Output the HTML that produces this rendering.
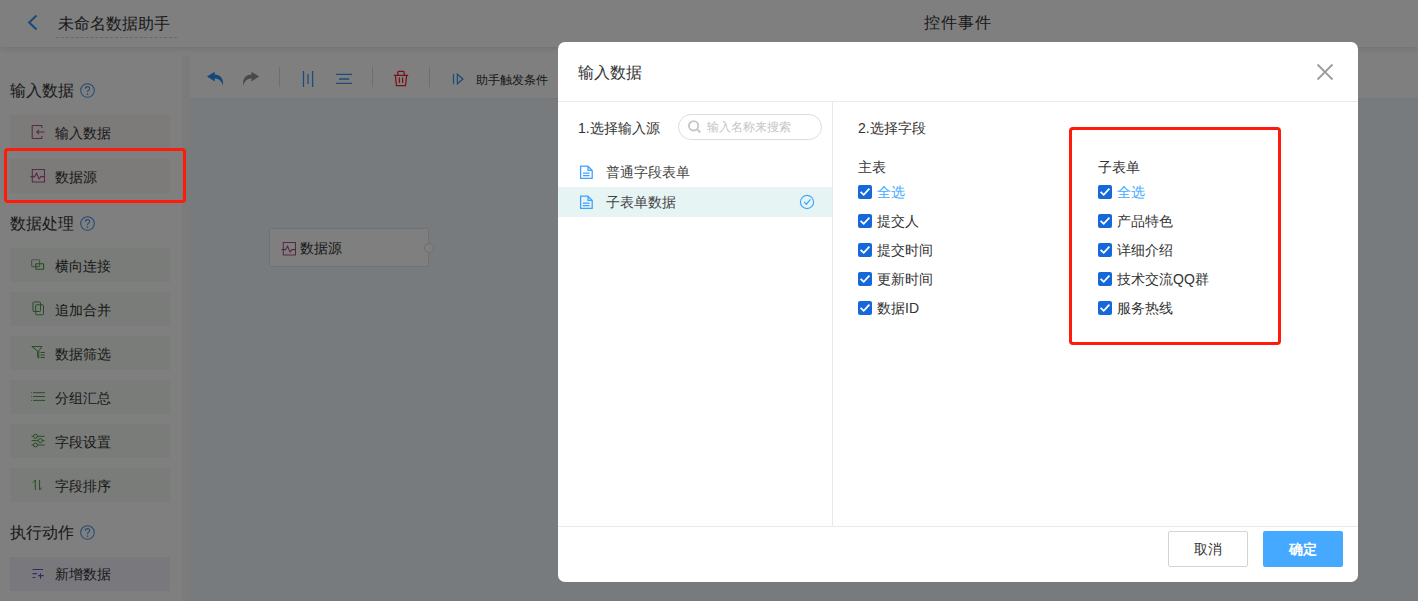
<!DOCTYPE html>
<html><head><meta charset="utf-8">
<style>
*{box-sizing:border-box;margin:0;padding:0}
html,body{width:1418px;height:601px;overflow:hidden;background:#fff;font-family:"Liberation Sans",sans-serif;color:#333}
.abs{position:absolute}
svg{position:absolute;overflow:visible}
.t{position:absolute;white-space:nowrap;line-height:20px;margin-top:1px}
#header{left:0;top:0;width:1418px;height:47px;background:#fff;box-shadow:0 2px 7px rgba(0,0,0,.11);z-index:2}
#sidebar{left:0;top:47px;width:182px;height:554px;background:#fff}
#strip{left:182px;top:55px;width:8px;height:546px;background:#f7f7f7}
#tbtop{display:none}
#toolbar{left:190px;top:47px;width:1228px;height:52px;background:#fff;border-bottom:1px solid #eee}
#canvas{left:190px;top:99px;width:1228px;height:502px;background:#f1f6fa}
.sec{position:absolute;left:10px;font-size:16px;line-height:20px;color:#333;margin-top:1px}
.help{position:absolute;left:80px;width:15px;height:15px;margin-top:0.5px}
.item{position:absolute;left:10px;width:160px;height:34px;font-size:14px;line-height:34px;color:#333}
.item svg{left:20px;top:9px}
.item span{position:absolute;left:45px;top:1px}
.in{background:#faf4f4}
.pr{background:#f4f8f3}
.ac{background:#f2f2fb}
#overlay{left:0;top:0;width:1418px;height:601px;background:rgba(0,0,0,.5);z-index:5}
#modal{left:558px;top:42px;width:800px;height:540px;background:#fff;border-radius:7px;z-index:6;overflow:hidden}
.red{position:absolute;border:3px solid #ff1a0a;border-radius:4px;z-index:10}
.cb{position:absolute;width:14px;height:14px;background:#1568d9;border-radius:2px}
.fl{position:absolute;font-size:14px;line-height:20px;color:#333;white-space:nowrap}
.btn{position:absolute;top:489px;width:80px;height:36px;border-radius:2px;font-size:14px;line-height:34px;text-align:center}
</style></head>
<body>
<!-- underlying page -->
<div id="header" class="abs">
  <svg style="left:26px;top:14px" width="14" height="18" viewBox="0 0 14 18"><path d="M10.5 1.5 L3.2 8.5 L10.5 15.5" fill="none" stroke="#3c96ee" stroke-width="2.2"/></svg>
  <div class="t" style="left:58px;top:13px;font-size:16px;color:#333">未命名数据助手</div>
  <div class="abs" style="left:56px;top:37px;width:121px;height:0;border-top:1px dashed #d0d0d0"></div>
  <div class="t" style="left:924px;top:12px;font-size:16px;color:#333;letter-spacing:1px">控件事件</div>
</div>
<div id="sidebar" class="abs"></div>
<div id="strip" class="abs"></div>
<div id="tbtop" class="abs"></div>
<div id="toolbar" class="abs"></div>
<div id="canvas" class="abs"></div>

<!-- toolbar icons -->
<svg style="left:207px;top:71px" width="17" height="16" viewBox="0 0 17 16"><path d="M0 5.4 L7.7 0.8 V3.6 C12.8 3.6 16.8 7 16 14.7 C14.6 10.2 11.8 7.6 7.7 7.6 V10.4 Z" fill="#2b8ff0"/></svg>
<svg style="left:243px;top:71px" width="17" height="16" viewBox="0 0 17 16"><path d="M16.2 5.4 L8.5 0.8 V3.6 C3.4 3.6 -0.6 7 0.2 14.7 C1.6 10.2 4.4 7.6 8.5 7.6 V10.4 Z" fill="#939393"/></svg>
<div class="abs" style="left:279px;top:67px;width:1px;height:20px;background:#ddd"></div>
<svg style="left:300px;top:70px" width="16" height="18" viewBox="0 0 16 18"><path d="M3.5 1 V17 M8 4 V14 M12.6 1 V17" stroke="#3c96ee" stroke-width="1.3" fill="none"/></svg>
<svg style="left:335px;top:72px" width="18" height="14" viewBox="0 0 18 14"><path d="M1 2.4 H17.2 M4 7 H14.2 M1 11.4 H17.2" stroke="#3c96ee" stroke-width="1.3" fill="none"/></svg>
<div class="abs" style="left:372px;top:67px;width:1px;height:20px;background:#ddd"></div>
<svg style="left:393px;top:70px" width="16" height="17" viewBox="0 0 16 17"><path d="M4.8 5 V2.4 Q4.8 1.3 5.9 1.3 H10.1 Q11.2 1.3 11.2 2.4 V5 M0.8 5.3 H15.2 M2.4 5.3 L3.4 15.7 H12.5 L13.6 5.3 M6.4 7.6 V13 M9.6 7.6 V13" stroke="#f0202a" stroke-width="1.25" fill="none"/></svg>
<div class="abs" style="left:429px;top:67px;width:1px;height:20px;background:#ddd"></div>
<svg style="left:450px;top:72px" width="16" height="14" viewBox="0 0 16 14"><path d="M3.5 1.8 V12.2 M7.4 2.2 L12.9 7 L7.4 11.8 Z" stroke="#3c96ee" stroke-width="1.3" fill="none"/></svg>
<div class="t" style="left:476px;top:69px;font-size:12px;color:#333">助手触发条件</div>

<!-- sidebar content -->
<div class="sec" style="top:80px">输入数据</div>
<svg class="help" style="top:82px" width="15" height="15" viewBox="0 0 15 15"><circle cx="7.5" cy="7.5" r="6.8" fill="none" stroke="#4a94e6" stroke-width="1.05"/><path d="M5.3 5.8 Q5.3 3.6 7.5 3.6 Q9.7 3.6 9.7 5.6 Q9.7 6.8 8.3 7.4 Q7.5 7.8 7.5 9" fill="none" stroke="#4a94e6" stroke-width="1.05"/><circle cx="7.5" cy="11.1" r=".8" fill="#3c96ee"/></svg>
<div class="item in" style="top:115px"><svg width="16" height="16" viewBox="0 0 16 16"><path d="M11.8 4 V1.5 H2.2 V14.5 H11.8 V12 M14.7 8 H6.8 M9 5.8 L6.8 8 L9 10.2" fill="none" stroke="#b0528a" stroke-width="1.05"/></svg><span>输入数据</span></div>
<div class="item in" style="top:159px"><svg width="16" height="16" viewBox="0 0 16 16"><path d="M2.3 1.5 H14.5 V14 H2.3 Z M0.5 8.6 H4.6 L6.6 5.2 L9 11 L10.8 8.6 H14.5" fill="none" stroke="#b0528a" stroke-width="1.05"/></svg><span>数据源</span></div>

<div class="sec" style="top:213px">数据处理</div>
<svg class="help" style="top:215px" width="15" height="15" viewBox="0 0 15 15"><circle cx="7.5" cy="7.5" r="6.8" fill="none" stroke="#4a94e6" stroke-width="1.05"/><path d="M5.3 5.8 Q5.3 3.6 7.5 3.6 Q9.7 3.6 9.7 5.6 Q9.7 6.8 8.3 7.4 Q7.5 7.8 7.5 9" fill="none" stroke="#4a94e6" stroke-width="1.05"/><circle cx="7.5" cy="11.1" r=".8" fill="#3c96ee"/></svg>
<div class="item pr" style="top:248px"><svg width="16" height="16" viewBox="0 0 16 16"><rect x="1.6" y="2.8" width="8" height="6.8" rx="1" fill="none" stroke="#8aac88" stroke-width="1.1"/><rect x="5.8" y="6.7" width="7.8" height="5.6" rx="0.6" fill="none" stroke="#4a9a3c" stroke-width="1.1"/></svg><span>横向连接</span></div>
<div class="item pr" style="top:292px"><svg width="16" height="16" viewBox="0 0 16 16"><rect x="3" y="1" width="7.5" height="9.5" rx="0.8" fill="none" stroke="#4e9a4a" stroke-width="1"/><rect x="5.7" y="3.8" width="7.8" height="10" rx="0.8" fill="none" stroke="#4e9a4a" stroke-width="1"/></svg><span>追加合并</span></div>
<div class="item pr" style="top:336px"><svg width="16" height="16" viewBox="0 0 16 16"><path d="M1.8 1.5 H12 L8.8 5.8 V13 L7.6 12.3 V6 Z M10.5 7.5 H14.8 M10.5 10 H14.8 M10.5 12.5 H14.8" fill="none" stroke="#4e9a4a" stroke-width="1"/></svg><span>数据筛选</span></div>
<div class="item pr" style="top:380px"><svg width="16" height="16" viewBox="0 0 16 16"><path d="M3 3.7 H15 M3 7.5 H15 M3 11.4 H15 M1 3.7 H1.8 M1 7.5 H1.8 M1 11.4 H1.8" fill="none" stroke="#4e9a4a" stroke-width="1"/></svg><span>分组汇总</span></div>
<div class="item pr" style="top:424px"><svg width="16" height="16" viewBox="0 0 16 16"><path d="M1.5 3.3 H14.6 M1.5 7.6 H14.6 M1.5 12 H14.6" fill="none" stroke="#4e9a4a" stroke-width="1"/><circle cx="5.5" cy="3.3" r="2" fill="#f3f8f2" stroke="#4e9a4a" stroke-width="1"/><circle cx="10.3" cy="7.6" r="2" fill="#f3f8f2" stroke="#4e9a4a" stroke-width="1"/><circle cx="5.5" cy="12" r="2" fill="#f3f8f2" stroke="#4e9a4a" stroke-width="1"/></svg><span>字段设置</span></div>
<div class="item pr" style="top:468px"><svg width="16" height="16" viewBox="0 0 16 16"><path d="M5.3 13 V3 L3 5.5 M9.6 3 V13 L11.9 10.5" fill="none" stroke="#4e9a4a" stroke-width="1"/></svg><span>字段排序</span></div>

<div class="sec" style="top:522px">执行动作</div>
<svg class="help" style="top:524px" width="15" height="15" viewBox="0 0 15 15"><circle cx="7.5" cy="7.5" r="6.8" fill="none" stroke="#4a94e6" stroke-width="1.05"/><path d="M5.3 5.8 Q5.3 3.6 7.5 3.6 Q9.7 3.6 9.7 5.6 Q9.7 6.8 8.3 7.4 Q7.5 7.8 7.5 9" fill="none" stroke="#4a94e6" stroke-width="1.05"/><circle cx="7.5" cy="11.1" r=".8" fill="#3c96ee"/></svg>
<div class="item ac" style="top:557px;height:34px"><svg style="top:8px" width="16" height="16" viewBox="0 0 16 16"><path d="M2.5 4.5 H13.2 M2.5 8.6 H7 M2.5 12.5 H5.5 M8.1 10.6 H13.7 M10.5 8.2 V13.8" fill="none" stroke="#5a5cc8" stroke-width="1.1"/></svg><span style="top:0">新增数据</span></div>

<!-- node -->
<div class="abs" style="left:269px;top:228px;width:160px;height:39px;background:#fff;border:1px solid #e3e3e3;border-radius:2px">
  <svg style="left:11px;top:12px" width="16" height="16" viewBox="0 0 16 16"><path d="M2.3 1.5 H14.5 V14 H2.3 Z M0.5 8.6 H4.6 L6.6 5.2 L9 11 L10.8 8.6 H14.5" fill="none" stroke="#b0528a" stroke-width="1.05"/></svg>
  <div class="t" style="left:30px;top:8px;font-size:14px;color:#333">数据源</div>
</div>
<div class="abs" style="left:424px;top:243px;width:10px;height:10px;border:1px solid #ddd;border-radius:50%;background:#fff"></div>

<div id="overlay" class="abs"></div>

<!-- modal -->
<div id="modal" class="abs">
  <div class="t" style="left:20px;top:20px;font-size:16px;color:#333">输入数据</div>
  <svg style="left:759px;top:22px" width="16" height="16" viewBox="0 0 16 16"><path d="M0.5 0.5 L15.5 15.5 M15.5 0.5 L0.5 15.5" stroke="#9c9c9c" stroke-width="1.8"/></svg>
  <div class="abs" style="left:0;top:59px;width:800px;height:1px;background:#e9e9e9"></div>
  <div class="abs" style="left:274px;top:60px;width:1px;height:424px;background:#e9e9e9"></div>
  <div class="abs" style="left:0;top:484px;width:800px;height:1px;background:#e9e9e9"></div>

  <div class="t" style="left:20px;top:75px;font-size:14px;color:#333">1.选择输入源</div>
  <div class="abs" style="left:120px;top:72px;width:144px;height:26px;border:1px solid #dcdcdc;border-radius:13px">
    <svg style="left:9px;top:5px" width="14" height="14" viewBox="0 0 14 14"><circle cx="5.6" cy="5.8" r="4.7" fill="none" stroke="#c8c8c8" stroke-width="1.9"/><path d="M9 9.3 L12.3 12.5" stroke="#c8c8c8" stroke-width="2"/></svg>
    <div class="t" style="left:28px;top:1px;font-size:12px;color:#c5c5c5">输入名称来搜索</div>
  </div>
  <svg style="left:21px;top:123px" width="15" height="15" viewBox="0 0 15 15"><path d="M1.6 1.2 H9 L13.2 5.4 V13.4 H1.6 Z M9 1.2 V5.4 H13.2 M4 8.2 H10.6 M4 10.6 H10.6" fill="none" stroke="#3ea1ff" stroke-width="1.3" stroke-linejoin="round"/></svg>
  <div class="t" style="left:48px;top:119px;font-size:14px;color:#444">普通字段表单</div>
  <div class="abs" style="left:0;top:145px;width:274px;height:30px;background:#e6f5f4"></div>
  <svg style="left:21px;top:153px" width="15" height="15" viewBox="0 0 15 15"><path d="M1.6 1.2 H9 L13.2 5.4 V13.4 H1.6 Z M9 1.2 V5.4 H13.2 M4 8.2 H10.6 M4 10.6 H10.6" fill="none" stroke="#3ea1ff" stroke-width="1.3" stroke-linejoin="round"/></svg>
  <div class="t" style="left:48px;top:149px;font-size:14px;color:#444">子表单数据</div>
  <svg style="left:241px;top:152px" width="16" height="16" viewBox="0 0 16 16"><circle cx="8" cy="8" r="6.6" fill="none" stroke="#40a9ff" stroke-width="1.2"/><path d="M5 7.9 L7.3 10.2 L11.5 5.4" fill="none" stroke="#40a9ff" stroke-width="1.3"/></svg>

  <div class="t" style="left:300px;top:75px;font-size:14px;color:#333">2.选择字段</div>
  <div class="t" style="left:300px;top:114px;font-size:14px;color:#333">主表</div>
  <div class="t" style="left:540px;top:114px;font-size:14px;color:#333">子表单</div>
  <div class="cb" style="left:300px;top:143px"><svg width="14" height="14" viewBox="0 0 14 14"><path d="M2.6 6.8 L5.7 9.8 L11.4 3.6" fill="none" stroke="#fff" stroke-width="1.8"/></svg></div><div class="fl" style="left:319px;top:140px;color:#40a9ff">全选</div>
  <div class="cb" style="left:300px;top:172px"><svg width="14" height="14" viewBox="0 0 14 14"><path d="M2.6 6.8 L5.7 9.8 L11.4 3.6" fill="none" stroke="#fff" stroke-width="1.8"/></svg></div><div class="fl" style="left:319px;top:169px;">提交人</div>
  <div class="cb" style="left:300px;top:201px"><svg width="14" height="14" viewBox="0 0 14 14"><path d="M2.6 6.8 L5.7 9.8 L11.4 3.6" fill="none" stroke="#fff" stroke-width="1.8"/></svg></div><div class="fl" style="left:319px;top:198px;">提交时间</div>
  <div class="cb" style="left:300px;top:230px"><svg width="14" height="14" viewBox="0 0 14 14"><path d="M2.6 6.8 L5.7 9.8 L11.4 3.6" fill="none" stroke="#fff" stroke-width="1.8"/></svg></div><div class="fl" style="left:319px;top:227px;">更新时间</div>
  <div class="cb" style="left:300px;top:259px"><svg width="14" height="14" viewBox="0 0 14 14"><path d="M2.6 6.8 L5.7 9.8 L11.4 3.6" fill="none" stroke="#fff" stroke-width="1.8"/></svg></div><div class="fl" style="left:319px;top:256px;">数据ID</div>
  <div class="cb" style="left:540px;top:143px"><svg width="14" height="14" viewBox="0 0 14 14"><path d="M2.6 6.8 L5.7 9.8 L11.4 3.6" fill="none" stroke="#fff" stroke-width="1.8"/></svg></div><div class="fl" style="left:559px;top:140px;color:#40a9ff">全选</div>
  <div class="cb" style="left:540px;top:172px"><svg width="14" height="14" viewBox="0 0 14 14"><path d="M2.6 6.8 L5.7 9.8 L11.4 3.6" fill="none" stroke="#fff" stroke-width="1.8"/></svg></div><div class="fl" style="left:559px;top:169px;">产品特色</div>
  <div class="cb" style="left:540px;top:201px"><svg width="14" height="14" viewBox="0 0 14 14"><path d="M2.6 6.8 L5.7 9.8 L11.4 3.6" fill="none" stroke="#fff" stroke-width="1.8"/></svg></div><div class="fl" style="left:559px;top:198px;">详细介绍</div>
  <div class="cb" style="left:540px;top:230px"><svg width="14" height="14" viewBox="0 0 14 14"><path d="M2.6 6.8 L5.7 9.8 L11.4 3.6" fill="none" stroke="#fff" stroke-width="1.8"/></svg></div><div class="fl" style="left:559px;top:227px;">技术交流QQ群</div>
  <div class="cb" style="left:540px;top:259px"><svg width="14" height="14" viewBox="0 0 14 14"><path d="M2.6 6.8 L5.7 9.8 L11.4 3.6" fill="none" stroke="#fff" stroke-width="1.8"/></svg></div><div class="fl" style="left:559px;top:256px;">服务热线</div>

  <div class="btn" style="left:610px;border:1px solid #d3d3d3;background:#fff;color:#333">取消</div>
  <div class="btn" style="left:705px;background:#45a9ff;color:#fff;line-height:36px;font-weight:bold">确定</div>
</div>

<div class="red" style="left:4px;top:148px;width:182px;height:55px"></div>
<div class="red" style="left:1069px;top:127px;width:212px;height:218px"></div>
</body></html>
